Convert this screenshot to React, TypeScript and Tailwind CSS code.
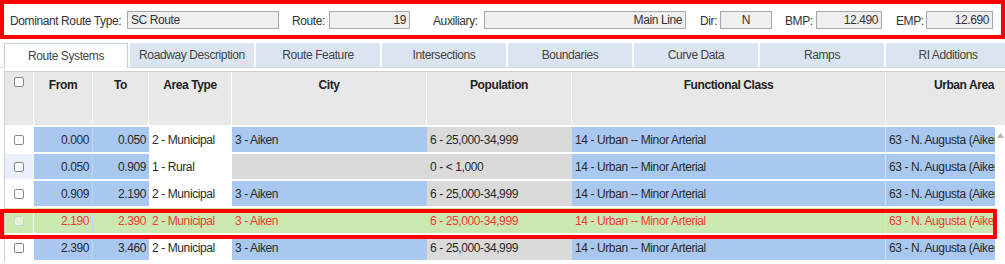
import React from "react";

const font = { fontFamily: '"Liberation Sans", Arial, sans-serif' };

const tabs = [
  "Route Systems",
  "Roadway Description",
  "Route Feature",
  "Intersections",
  "Boundaries",
  "Curve Data",
  "Ramps",
  "RI Additions",
];

type Row = {
  from: string;
  to: string;
  area: string;
  city: string;
  pop: string;
  fc: string;
  ua: string;
  hover?: boolean;
  current?: boolean;
};

const rows: Row[] = [
  { from: "0.000", to: "0.050", area: "2 - Municipal", city: "3 - Aiken", pop: "6 - 25,000-34,999", fc: "14 - Urban -- Minor Arterial", ua: "63 - N. Augusta (Aiken)" },
  { from: "0.050", to: "0.909", area: "1 - Rural", city: "", pop: "0 - < 1,000", fc: "14 - Urban -- Minor Arterial", ua: "63 - N. Augusta (Aiken)", hover: true },
  { from: "0.909", to: "2.190", area: "2 - Municipal", city: "3 - Aiken", pop: "6 - 25,000-34,999", fc: "14 - Urban -- Minor Arterial", ua: "63 - N. Augusta (Aiken)" },
  { from: "2.190", to: "2.390", area: "2 - Municipal", city: "3 - Aiken", pop: "6 - 25,000-34,999", fc: "14 - Urban -- Minor Arterial", ua: "63 - N. Augusta (Aiken)", current: true },
  { from: "2.390", to: "3.460", area: "2 - Municipal", city: "3 - Aiken", pop: "6 - 25,000-34,999", fc: "14 - Urban -- Minor Arterial", ua: "63 - N. Augusta (Aiken)" },
];

const Field = ({ label, labelW, value, w, align, ml }: { label: string; labelW: string; value: string; w: string; align: string; ml: string }) => (
  <div className={`flex items-center ${ml}`}>
    <span className={`${labelW} pt-[3px] text-[#333]`}>{label}</span>
    <div className={`${w} h-[18px] border border-[#a8a8a8] bg-[#efefef] px-[3px] leading-[16px] text-[#333] ${align}`}>{value}</div>
  </div>
);

const Check = ({ faded }: { faded?: boolean }) => (
  <div className={`h-[10px] w-[10px] rounded-[2px] border ${faded ? "border-[#c9d9c0] bg-[#e4f0da]" : "border-[#8a8a8a] bg-white"}`} />
);

const App = () => {
  return (
    <div className="relative h-[264px] w-[1005px] overflow-hidden bg-white text-[12px] tracking-[-0.4px]" style={font}>
      {/* header fields */}
      <div className="flex h-[39px] items-center border-4 border-[#ff0000] bg-white pl-[6px]">
        <Field label="Dominant Route Type:" labelW="w-[117px]" value="SC Route" w="w-[152px]" align="text-left" ml="" />
        <Field label="Route:" labelW="w-[37px]" value="19" w="w-[81px]" align="text-right" ml="ml-[13px]" />
        <Field label="Auxiliary:" labelW="w-[51px]" value="Main Line" w="w-[202px]" align="text-right" ml="ml-[23px]" />
        <Field label="Dir:" labelW="w-[20px]" value="N" w="w-[52px]" align="text-center" ml="ml-[14px]" />
        <Field label="BMP:" labelW="w-[31px]" value="12.490" w="w-[66px]" align="text-right" ml="ml-[13px]" />
        <Field label="EMP:" labelW="w-[30px]" value="12.690" w="w-[67px]" align="text-right" ml="ml-[14px]" />
      </div>

      {/* tabs */}
      <div className="mt-[4px] flex h-[25px] items-end border-b border-[#d4dce6] pl-[4px]">
        {tabs.map((t, i) =>
          i === 0 ? (
            <div key={t} className="-mb-px flex h-[25px] w-[124px] shrink-0 items-center justify-center border border-b-0 border-[#c4cfdc] bg-white text-[#444]">
              {t}
            </div>
          ) : (
            <div key={t} className="ml-[2px] flex h-[24px] w-[124px] shrink-0 items-center justify-center bg-[#dbe5f1] text-[#444]">
              {t}
            </div>
          )
        )}
      </div>

      {/* grid */}
      <div className="ml-[4px] mt-[3px] border-l border-t border-[#cfcfcf]">
        <div className="flex h-[53px] bg-[#e8e8e8] font-bold text-[#222]">
          <div className="flex w-[29px] shrink-0 justify-center border-r border-white pt-[5px]">
            <Check />
          </div>
          <div className="w-[59px] shrink-0 border-r border-white pt-[4px] text-center">From</div>
          <div className="w-[56px] shrink-0 border-r border-white pt-[4px] text-center">To</div>
          <div className="w-[83px] shrink-0 border-r border-white pt-[4px] text-center">Area Type</div>
          <div className="w-[195px] shrink-0 border-r border-white pt-[4px] text-center">City</div>
          <div className="w-[145px] shrink-0 border-r border-white pt-[4px] text-center">Population</div>
          <div className="w-[314px] shrink-0 border-r border-white pt-[4px] text-center">Functional Class</div>
          <div className="w-[156px] shrink-0 pt-[4px] text-center">Urban Area</div>
        </div>

        <div className="mt-[2px] flex">
          <div className="w-[990px] overflow-hidden">
            {rows.map((r) => {
              const blue = r.current ? "bg-[#cce8b1]" : "bg-[#a8c8ef]";
              const gray = r.current ? "bg-[#cce8b1]" : "bg-[#dadada]";
              const plain = r.current ? "bg-[#cce8b1]" : "bg-white";
              const txt = r.current ? "text-[#ee3b34]" : "text-[#2a2a2a]";
              return (
                <div key={r.from} className={`mb-[2px] flex h-[25px] w-[1042px] items-stretch ${txt}`}>
                  <div className={`flex w-[29px] shrink-0 items-center justify-center border-r border-white ${r.hover ? "bg-[#e9f0fa]" : plain}`}>
                    <Check faded={r.current} />
                  </div>
                  <div className={`flex w-[59px] shrink-0 items-center justify-end border-r border-[#bcd5f3] pr-[3px] ${blue}`}>{r.from}</div>
                  <div className={`flex w-[56px] shrink-0 items-center justify-end pr-[3px] ${blue}`}>{r.to}</div>
                  <div className={`flex w-[83px] shrink-0 items-center pl-[3px] ${plain}`}>{r.area}</div>
                  <div className={`flex w-[195px] shrink-0 items-center pl-[3px] ${r.city ? blue : gray}`}>{r.city}</div>
                  <div className={`flex w-[145px] shrink-0 items-center pl-[3px] ${gray}`}>{r.pop}</div>
                  <div className={`flex w-[314px] shrink-0 items-center border-r border-[#d6e4f5] pl-[3px] ${blue}`}>{r.fc}</div>
                  <div className={`flex w-[156px] shrink-0 items-center whitespace-nowrap pl-[3px] ${blue}`}>{r.ua}</div>
                </div>
              );
            })}
          </div>
          <div className="flex w-[10px] shrink-0 justify-center bg-white pt-[6px]">
            <svg width="7" height="5" viewBox="0 0 7 5">
              <path d="M3.5 0 L7 5 L0 5 Z" fill="#b4b4b4" />
            </svg>
          </div>
        </div>
      </div>

      {/* highlight marker round the current row */}
      <div className="pointer-events-none absolute left-0 top-[209px] h-[30px] w-[997px] border-4 border-[#ff0000]" />
    </div>
  );
};

export default App;
